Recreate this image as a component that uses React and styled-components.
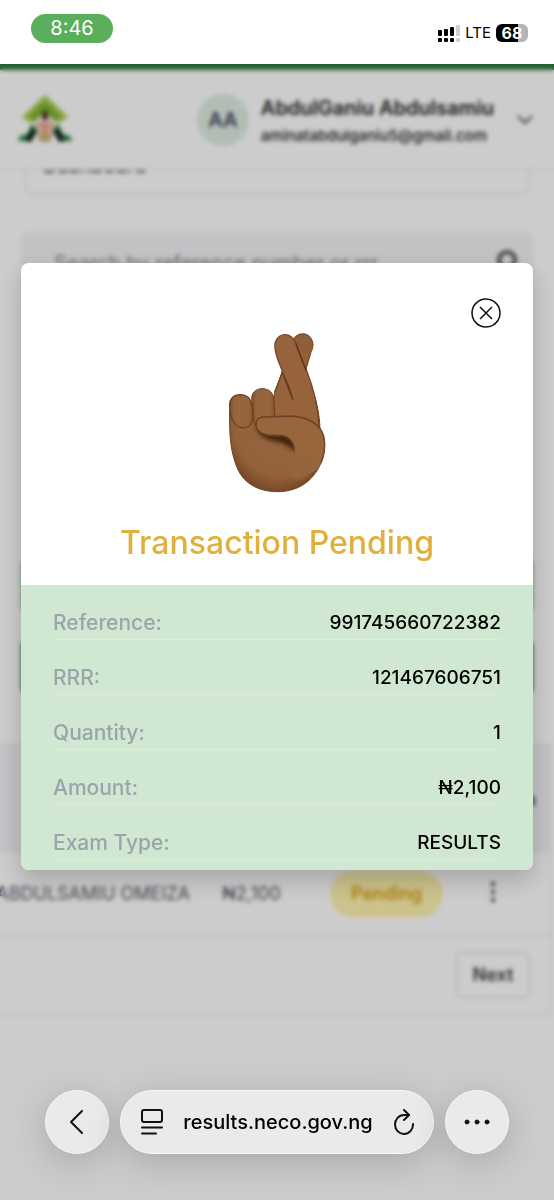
import React, { useState } from "react";
import styled, { createGlobalStyle } from "styled-components";

const details = [
  { label: "Reference:", value: "991745660722382" },
  { label: "RRR:", value: "121467606751" },
  { label: "Quantity:", value: "1" },
  { label: "Amount:", value: "₦2,100" },
  { label: "Exam Type:", value: "RESULTS" },
];

const Logo = () => (
  <svg width="56" height="50" viewBox="0 0 56 50" aria-hidden="true">
    <path d="M28 0 L51 22 L42 28 L28 15 L14 28 L5 22 Z" fill="#a4cf4a" />
    <path d="M28 7 L43 21 L38 27 L28 18 L18 27 L13 21 Z" fill="#7fae38" />
    <path d="M15 29 L22 34 L14 46 L1 46 L3 41 L10 39 Z" fill="#2f8a45" />
    <path d="M41 29 L34 34 L42 46 L55 46 L53 41 L46 39 Z" fill="#2f8a45" />
    <path d="M14 34 L20 36 L14 47 L8 46 Z" fill="#14241a" />
    <path d="M42 34 L36 36 L42 47 L48 46 Z" fill="#14241a" />
    <circle cx="28" cy="30" r="10" fill="#f6efe6" />
    <path d="M26 16 h4 l1 9 h-6 z" fill="#4b2a24" />
    <path d="M20 28 h16 l-2 10 h-12 z" fill="#e58370" />
    <path d="M23 30 h3 v10 h-3 z M30 30 h3 v10 h-3 z" fill="#f7e7d6" />
    <path d="M20 38 h16 l-3 9 h-10 z" fill="#cdb57e" />
  </svg>
);

const CrossedFingers = () => (
  <svg width="100" height="162" viewBox="50 35 300 486" role="img" aria-label="Crossed fingers">
    <defs>
      <radialGradient id="palm" cx="0.5" cy="0.42" r="0.6">
        <stop offset="0" stopColor="#976740" />
        <stop offset="0.75" stopColor="#936139" />
        <stop offset="1" stopColor="#744626" />
      </radialGradient>
      <linearGradient id="finger" x1="0" y1="0" x2="1" y2="0">
        <stop offset="0" stopColor="#7d4e2b" />
        <stop offset="0.2" stopColor="#97653d" />
        <stop offset="0.8" stopColor="#97653d" />
        <stop offset="1" stopColor="#7f502d" />
      </linearGradient>
      <filter id="soft" x="-30%" y="-30%" width="160%" height="160%">
        <feGaussianBlur stdDeviation="6" />
      </filter>
      <filter id="edge" x="-10%" y="-10%" width="120%" height="120%">
        <feGaussianBlur stdDeviation="1" />
      </filter>
    </defs>
    <g filter="url(#edge)">
      <path
        d="M250 55 C262 36 291 35 302 54 C312 70 308 82 302 96 L286 150 L245 240 L190 240 L216 150 Z"
        fill="#8f5e37"
        stroke="#6b4023"
        strokeWidth="3"
      />
      <path
        d="M58 270 C56 350 62 400 82 446 C104 494 150 514 202 514 C262 514 308 484 332 428 C346 394 348 350 329 325 C327 270 314 218 286 152 L216 156 L193 214 L190 290 L128 290 Z"
        fill="url(#palm)"
        stroke="#6f4425"
        strokeWidth="3"
      />
      <path
        d="M193 216 L217 154 C206 128 198 110 195 90 C189 64 203 44 222 43 C238 42 249 52 256 68 C266 94 278 124 290 154 C310 204 322 256 327 320 C300 300 270 290 240 290 L190 290 Z"
        fill="#96643c"
      />
      <path
        d="M193 216 L217 154 C206 128 198 110 195 90 C189 64 203 44 222 43 C238 42 249 52 256 68 C266 94 278 124 290 154 C310 204 322 256 327 320"
        fill="none"
        stroke="#754727"
        strokeWidth="4"
      />
      <path
        d="M217 158 C226 188 238 216 248 239 C242 212 232 186 217 158 Z"
        fill="#6a4122"
        stroke="#633b20"
        strokeWidth="3"
        strokeLinejoin="round"
      />
      <path d="M256 68 C266 96 276 124 288 152" fill="none" stroke="#5c361d" strokeWidth="4" />
      <path
        d="M124 232 C126 212 142 204 158 205 C178 206 190 220 191 236 L194 296 L150 340 L132 308 Z"
        fill="url(#finger)"
        stroke="#6b4023"
        strokeWidth="3"
      />
      <path
        d="M58 258 C56 236 70 223 90 223 C112 223 124 238 126 258 C128 280 132 294 124 308 C112 328 84 326 72 308 C60 292 59 278 58 258 Z"
        fill="url(#finger)"
        stroke="#6b4023"
        strokeWidth="4"
      />
    </g>
    <path
      d="M134 316 C150 356 182 360 206 366 C228 372 244 384 256 396 C262 370 246 342 214 340 C180 340 150 330 134 316 Z"
      fill="#45240f"
      filter="url(#soft)"
    />
    <g filter="url(#edge)">
      <path
        d="M137 310 C138 294 150 289 166 290 L242 287 C282 290 312 302 330 326 C348 352 346 394 332 428 C314 466 278 470 256 430 C262 396 250 352 218 346 C190 350 166 348 150 336 C140 328 137 320 137 310 Z"
        fill="#97663e"
      />
      <path
        d="M330 326 C312 302 282 290 242 287 L166 290 C150 289 138 294 137 310 C137 320 140 328 150 336 C168 350 196 342 218 346 C236 350 248 364 252 382"
        fill="none"
        stroke="#6a4024"
        strokeWidth="4"
        strokeLinecap="round"
      />
      <path d="M330 326 C348 352 346 394 332 428" fill="none" stroke="#6f4425" strokeWidth="4" />
    </g>
    <ellipse cx="264" cy="438" rx="40" ry="40" fill="#95643c" filter="url(#soft)" />
  </svg>
);

const App = () => {
  const [open, setOpen] = useState(true);

  return (
    <Screen>
      <GlobalStyle />
      <StatusBar>
        <Clock>8:46</Clock>
        <StatusIcons>
          <svg width="22" height="17" viewBox="0 0 22 17" aria-hidden="true">
            <rect x="0" y="5" width="4" height="6" rx="1" />
            <rect x="6" y="4" width="4" height="7" rx="1" />
            <rect x="12" y="2" width="4" height="9" rx="1" />
            <rect x="18" y="0" width="4" height="11" rx="1" fill="#cfcfcf" />
            <rect x="0" y="13" width="4" height="4" rx="1" />
            <rect x="6" y="13" width="4" height="4" rx="1" />
            <rect x="12" y="13" width="4" height="4" rx="1" />
            <rect x="18" y="13" width="4" height="4" rx="1" fill="#cfcfcf" />
          </svg>
          <span>LTE</span>
          <Battery>68</Battery>
        </StatusIcons>
      </StatusBar>

      <Viewport>
        <Header>
          <Logo />
          <Avatar>AA</Avatar>
          <User>
            <strong>AbdulGaniu Abdulsamiu</strong>
            <span>aminatabdulganiu5@gmail.com</span>
          </User>
          <svg width="18" height="12" viewBox="0 0 18 12" aria-hidden="true">
            <path d="M2 2 L9 9 L16 2" fill="none" stroke="#555" strokeWidth="2" />
          </svg>
        </Header>
        <Content>
          <PageCard>Dashboard</PageCard>
          <SearchBox>
            <input
              type="text"
              aria-label="Search by reference number or rrr"
              placeholder="Search by reference number or rrr"
            />
            <svg width="24" height="28" viewBox="0 0 24 28" aria-hidden="true">
              <circle cx="12" cy="11" r="8" fill="none" stroke="#555" strokeWidth="4" />
              <path d="M18 18 L23 25" stroke="#555" strokeWidth="4" />
            </svg>
          </SearchBox>
          <Actions>
            <ActionButton type="button" aria-label="Filter" $color="#8fbf9f" />
            <ActionButton type="button" aria-label="Export" $color="#2d8a4e" />
          </Actions>
          <TablePanel>
            <TableScroll>
              <Table>
                <thead>
                  <tr>
                    <th>Name</th>
                    <th>Amount</th>
                    <th>Status</th>
                    <th>Action</th>
                  </tr>
                </thead>
                <tbody>
                  <tr>
                    <td>ABDULSAMIU OMEIZA</td>
                    <td>₦2,100</td>
                    <td>
                      <Badge>Pending</Badge>
                    </td>
                    <td>
                      <MenuButton type="button" aria-label="More">
                        <svg width="6" height="24" viewBox="0 0 6 24">
                          <circle cx="3" cy="4" r="2" />
                          <circle cx="3" cy="12" r="2" />
                          <circle cx="3" cy="20" r="2" />
                        </svg>
                      </MenuButton>
                    </td>
                  </tr>
                </tbody>
              </Table>
            </TableScroll>
            <Pagination>
              <button type="button">Next</button>
            </Pagination>
          </TablePanel>
        </Content>

        {open && (
          <Backdrop>
            <Modal role="dialog" aria-labelledby="modal-title">
              <ModalTop>
                <CloseButton type="button" aria-label="Close" onClick={() => setOpen(false)}>
                  <svg width="30" height="30" viewBox="0 0 30 30">
                    <circle cx="15" cy="15" r="14" />
                    <path d="M9 9 L21 21 M21 9 L9 21" />
                  </svg>
                </CloseButton>
                <CrossedFingers />
                <h2 id="modal-title">Transaction Pending</h2>
              </ModalTop>
              <Details>
                {details.map((item) => (
                  <DetailRow key={item.label}>
                    <dt>{item.label}</dt>
                    <dd>{item.value}</dd>
                  </DetailRow>
                ))}
              </Details>
            </Modal>
          </Backdrop>
        )}
      </Viewport>

      <Toolbar>
        <RoundButton type="button" aria-label="Back">
          <svg width="14" height="24" viewBox="0 0 14 24">
            <path d="M12 1 L1 12 L12 23" />
          </svg>
        </RoundButton>
        <AddressBar>
          <BarButton type="button" aria-label="Page menu">
            <svg width="22" height="26" viewBox="0 0 22 26">
              <rect x="1" y="1" width="20" height="12" rx="2" />
              <path d="M1 18.500 H21 M1 24.500 H15" />
            </svg>
          </BarButton>
          <a href="#results">results.neco.gov.ng</a>
          <BarButton type="button" aria-label="Reload">
            <svg width="22" height="26" viewBox="0 0 22 26">
              <path d="M16 6 H11 A9 9.500 0 1 0 20 15" />
              <path d="M11 1 L16 6 L11 11" />
            </svg>
          </BarButton>
        </AddressBar>
        <RoundButton type="button" aria-label="More options">
          <svg width="26" height="6" viewBox="0 0 26 6">
            <circle cx="3" cy="3" r="2" />
            <circle cx="13" cy="3" r="2" />
            <circle cx="23" cy="3" r="2" />
          </svg>
        </RoundButton>
      </Toolbar>
    </Screen>
  );
};

const GlobalStyle = createGlobalStyle`
  * {
    box-sizing: border-box;
  }
  body {
    margin: 0;
    background: #fff;
    font-family: Inter, "Liberation Sans", sans-serif;
    font-size: 20px;
    color: #000;
  }
  button {
    font: inherit;
    cursor: pointer;
  }
`;

const Screen = styled.div`
  min-height: 100vh;
  display: flex;
  flex-direction: column;
`;

const StatusBar = styled.div`
  height: 64px;
  padding: 0 26px 0 31px;
  display: flex;
  align-items: flex-start;
  justify-content: space-between;
`;

const Clock = styled.div`
  width: 82px;
  margin-top: 14px;
  border-radius: 15px;
  background: #5aae5c;
  color: #fff;
  line-height: 29px;
  text-align: center;
`;

const StatusIcons = styled.div`
  margin-top: 24px;
  display: flex;
  align-items: center;
  gap: 5px;
  font-size: 15px;
  line-height: 18px;
`;

const Battery = styled.div`
  width: 32px;
  border-radius: 6px;
  background: linear-gradient(to right, #000 68%, #b4b4b4 68%);
  color: #fff;
  font-size: 16px;
  font-weight: 700;
  text-align: center;
`;

const Viewport = styled.div`
  position: relative;
  flex: 1;
  display: flex;
  flex-direction: column;
`;

const Header = styled.header`
  height: 106px;
  padding: 0 20px 0 17px;
  border-top: 6px solid #2a7a3e;
  border-bottom: 1px solid #ececf0;
  display: flex;
  align-items: center;
`;

const Avatar = styled.div`
  width: 52px;
  height: 52px;
  margin: 0 12px 0 auto;
  border-radius: 50%;
  background: #dfeee1;
  color: #3c4260;
  font-weight: 600;
  line-height: 52px;
  text-align: center;
`;

const User = styled.div`
  margin-right: 22px;
  padding-top: 4px;
  display: flex;
  flex-direction: column;
  font-size: 15px;
  font-weight: 500;
  line-height: 28px;
  color: #222;
  strong {
    font-size: 20px;
    font-weight: 600;
  }
`;

const Content = styled.main`
  flex: 1;
  overflow: hidden;
`;

const PageCard = styled.div`
  height: 54px;
  margin: -30px 25px 0 26px;
  padding-left: 16px;
  border: 1px solid #eeeef2;
  border-radius: 8px;
  box-shadow: 0 2px 4px rgba(0, 0, 0, 0.05);
  line-height: 50px;
  color: #444a60;
`;

const SearchBox = styled.div`
  height: 62px;
  margin: 38px 21px 0;
  padding: 0 14px 0 33px;
  border-radius: 8px;
  background: #f1f3f5;
  display: flex;
  align-items: center;
  gap: 12px;
  input {
    flex: 1;
    min-width: 0;
    padding: 0;
    border: 0;
    outline: 0;
    background: none;
    font: inherit;
  }
  input::placeholder {
    color: #8b8d93;
    opacity: 1;
  }
`;

const Actions = styled.div`
  padding: 264px 21px 50px;
  display: flex;
  flex-direction: column;
  gap: 28px;
`;

const ActionButton = styled.button`
  height: 54px;
  border: 0;
  border-radius: 6px;
  background: ${(props) => props.$color};
`;

const TablePanel = styled.section`
  margin-right: 3px;
  border: 1px solid #e9e9ef;
  border-left: 0;
`;

// columns overflow to the left, as if scrolled to the last one
const TableScroll = styled.div`
  display: flex;
  justify-content: flex-end;
  overflow: hidden;
`;

const Table = styled.table`
  flex: none;
  border-collapse: collapse;
  font-size: 18px;
  text-align: left;
  th {
    height: 108px;
    padding: 0 16px;
    background: #f4f4f9;
    font-weight: 600;
    color: #333;
  }
  td {
    height: 82px;
    padding: 0 16px;
    border-bottom: 1px solid #e6e6ec;
    color: #5a5c68;
  }
  td:first-child {
    width: 224px;
    white-space: nowrap;
  }
  th:first-child {
    padding-left: 64px;
  }
  td:nth-child(2) {
    width: 124px;
  }
  th:nth-child(n + 3),
  td:nth-child(n + 3) {
    padding: 0;
  }
  td:nth-child(3) {
    width: 146px;
  }
  td:last-child {
    width: 74px;
    padding-left: 14px;
  }
  th:last-child {
    padding-right: 14px;
    text-align: right;
  }
`;

const Badge = styled.span`
  display: inline-block;
  padding: 0 21px;
  border-radius: 24px;
  background: #fff3b0;
  color: #d9a514;
  font-size: 18px;
  font-weight: 600;
  line-height: 46px;
`;

const MenuButton = styled.button`
  padding: 0;
  border: 0;
  background: none;
  fill: #222;
`;

const Pagination = styled.div`
  padding: 16px 20px;
  display: flex;
  justify-content: flex-end;
  button {
    width: 74px;
    height: 46px;
    padding: 0;
    border: 1px solid #d0d0d8;
    border-radius: 6px;
    background: #fff;
    color: #3c3e48;
    font-size: 18px;
    font-weight: 600;
  }
`;

const Backdrop = styled.div`
  position: absolute;
  inset: 0;
  padding: 0 21px 131px;
  background: rgba(0, 0, 0, 0.2);
  backdrop-filter: blur(2px);
  display: flex;
  align-items: center;
`;

const Modal = styled.div`
  flex: 1;
  border-radius: 8px;
  overflow: hidden;
  background: #fff;
  box-shadow: 0 10px 24px rgba(0, 0, 0, 0.2);
`;

const ModalTop = styled.div`
  padding: 35px 32px 22px;
  display: flex;
  flex-direction: column;
  align-items: center;
  gap: 4px;
  h2 {
    margin: 25px 0 0;
    font-size: 32px;
    font-weight: 500;
    line-height: 40px;
    color: #e0b03c;
  }
`;

const CloseButton = styled.button`
  align-self: flex-end;
  height: 30px;
  padding: 0;
  border: 0;
  background: none;
  svg {
    display: block;
    fill: none;
    stroke: #111;
    stroke-width: 1.5;
  }
`;

const Details = styled.dl`
  margin: 0;
  padding: 0 32px 10px;
  background: #d0e8d1;
`;

const DetailRow = styled.div`
  height: 55px;
  padding: 23px 0 1px;
  border-bottom: 1px solid #e3e7e7;
  display: flex;
  justify-content: space-between;
  line-height: 30px;
  dt {
    font-size: 21px;
    font-weight: 500;
    color: #9aa5ab;
  }
  dd {
    margin: 0;
    font-size: 19px;
    font-weight: 500;
  }
`;

const Toolbar = styled.nav`
  position: fixed;
  right: 0;
  bottom: 46px;
  left: 0;
  padding: 0 45px;
  display: flex;
  gap: 11px;
  svg {
    display: block;
    fill: none;
    stroke: #111;
    stroke-width: 2;
    stroke-linecap: round;
    stroke-linejoin: round;
  }
  circle {
    fill: #111;
    stroke-width: 1;
  }
`;

const RoundButton = styled.button`
  width: 64px;
  height: 64px;
  padding: 0;
  border: 1px solid #f6f6f6;
  border-radius: 50%;
  background: #eaeaea;
  box-shadow: 0 8px 36px rgba(0, 0, 0, 0.18);
  display: flex;
  align-items: center;
  justify-content: center;
`;

const AddressBar = styled.div`
  flex: 1;
  height: 64px;
  padding: 0 18px 0 20px;
  border: 1px solid #f6f6f6;
  border-radius: 32px;
  background: #eaeaea;
  box-shadow: 0 8px 36px rgba(0, 0, 0, 0.18);
  display: flex;
  align-items: center;
  justify-content: space-between;
  a {
    color: #000;
    font-weight: 500;
    text-decoration: none;
  }
`;

const BarButton = styled.button`
  padding: 0;
  border: 0;
  background: none;
`;

export default App;
